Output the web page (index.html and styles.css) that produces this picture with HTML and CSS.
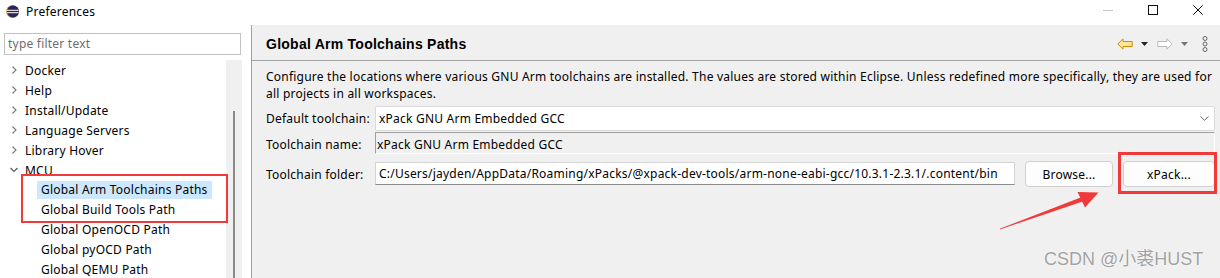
FILE: index.html
```html
<!DOCTYPE html>
<html>
<head>
<meta charset="utf-8">
<link rel="stylesheet" href="styles.css">
</head>
<body>
<div class="window">
  <div class="titlebar">
    <svg class="app-icon" width="13" height="13" viewBox="0 0 13 13">
      <circle cx="6.5" cy="6.5" r="6.5" fill="#e39a3b"/>
      <circle cx="7" cy="6.5" r="6" fill="#2c2457"/>
      <path d="M1 5.3h11.5M1 7.7h11.5" stroke="#fff" stroke-width="1"/>
    </svg>
    <span class="title">Preferences</span>
    <div class="win-controls">
      <div class="win-btn"><svg width="10" height="10" viewBox="0 0 10 10"><path d="M0 5.5h10" stroke="#c4c4c4" stroke-width="1"/></svg></div>
      <div class="win-btn"><svg width="10" height="10" viewBox="0 0 10 10"><rect x="0.5" y="0.5" width="9" height="9" fill="none" stroke="#111" stroke-width="1"/></svg></div>
      <div class="win-btn"><svg width="10" height="10" viewBox="0 0 10 10"><path d="M0.3 0.3L9.7 9.7M9.7 0.3L0.3 9.7" stroke="#111" stroke-width="1"/></svg></div>
    </div>
  </div>
  <div class="main">
    <aside class="left">
      <div class="filter">type filter text</div>
      <div class="tree-wrap">
        <div class="tree">
          <div class="row"><svg class="chev" width="8" height="8" viewBox="0 0 8 8"><path d="M2.5 0.5L6 4L2.5 7.5" fill="none" stroke="#777" stroke-width="1.1"/></svg><span>Docker</span></div>
          <div class="row"><svg class="chev" width="8" height="8" viewBox="0 0 8 8"><path d="M2.5 0.5L6 4L2.5 7.5" fill="none" stroke="#777" stroke-width="1.1"/></svg><span>Help</span></div>
          <div class="row"><svg class="chev" width="8" height="8" viewBox="0 0 8 8"><path d="M2.5 0.5L6 4L2.5 7.5" fill="none" stroke="#777" stroke-width="1.1"/></svg><span>Install/Update</span></div>
          <div class="row"><svg class="chev" width="8" height="8" viewBox="0 0 8 8"><path d="M2.5 0.5L6 4L2.5 7.5" fill="none" stroke="#777" stroke-width="1.1"/></svg><span>Language Servers</span></div>
          <div class="row"><svg class="chev" width="8" height="8" viewBox="0 0 8 8"><path d="M2.5 0.5L6 4L2.5 7.5" fill="none" stroke="#777" stroke-width="1.1"/></svg><span>Library Hover</span></div>
          <div class="row"><svg class="chev" width="8" height="8" viewBox="0 0 8 8"><path d="M0.5 2L4 5.5L7.5 2" fill="none" stroke="#555" stroke-width="1.1"/></svg><span>MCU</span></div>
          <div class="row child"><span class="label selected">Global Arm Toolchains Paths</span></div>
          <div class="row child"><span class="label">Global Build Tools Path</span></div>
          <div class="row child"><span class="label">Global OpenOCD Path</span></div>
          <div class="row child"><span class="label">Global pyOCD Path</span></div>
          <div class="row child"><span class="label">Global QEMU Path</span></div>
        </div>
        <div class="track"><div class="thumb"></div></div>
      </div>
    </aside>
    <main class="right">
      <div class="header">
        <span class="page-title">Global Arm Toolchains Paths</span>
        <div class="toolbar">
          <svg class="tb-back" width="16" height="12" viewBox="0 0 16 12"><path d="M0.8 6L6 0.8V3.5H15.2V8.5H6V11.2Z" fill="#fde7a0" stroke="#d38b00" stroke-width="1"/></svg>
          <svg class="tb-drop" width="7" height="4" viewBox="0 0 7 4"><path d="M0 0H7L3.5 4Z" fill="#222"/></svg>
          <svg class="tb-fwd" width="16" height="12" viewBox="0 0 16 12"><path d="M15.2 6L10 0.8V3.5H0.8V8.5H10V11.2Z" fill="#fff" stroke="#b9b9b9" stroke-width="1"/></svg>
          <svg class="tb-drop2" width="7" height="4" viewBox="0 0 7 4"><path d="M0 0H7L3.5 4Z" fill="#777"/></svg>
          <svg class="tb-menu" width="6" height="16" viewBox="0 0 6 16"><circle cx="3" cy="2.5" r="2" fill="none" stroke="#666" stroke-width="1"/><circle cx="3" cy="8" r="2" fill="none" stroke="#666" stroke-width="1"/><circle cx="3" cy="13.5" r="2" fill="none" stroke="#666" stroke-width="1"/></svg>
        </div>
      </div>
      <p class="desc">Configure the locations where various GNU Arm toolchains are installed. The values are stored within Eclipse. Unless redefined more specifically, they are used for all projects in all workspaces.</p>
      <div class="form">
        <div class="lbl r1">Default toolchain:</div>
        <div class="combo"><span>xPack GNU Arm Embedded GCC</span><svg width="9" height="5" viewBox="0 0 9 5"><path d="M0.5 0.5L4.5 4.3L8.5 0.5" fill="none" stroke="#666" stroke-width="1"/></svg></div>
        <div class="lbl r2">Toolchain name:</div>
        <div class="readonly">xPack GNU Arm Embedded GCC</div>
        <div class="lbl r3">Toolchain folder:</div>
        <div class="textfield">C:/Users/jayden/AppData/Roaming/xPacks/@xpack-dev-tools/arm-none-eabi-gcc/10.3.1-2.3.1/.content/bin</div>
        <div class="btn">Browse...</div>
        <div class="btn">xPack...</div>
      </div>
    </main>
  </div>
  <div class="mark mark-tree"></div>
  <div class="mark mark-btn"></div>
  <svg class="arrow" width="115" height="50" viewBox="0 0 115 50">
    <polygon points="9.8,44.5 10.2,43.5 90.6,12.6 92.6,16.4" fill="#f03a3a"/>
    <polygon points="87.5,7 108.5,7.6 95,22.5" fill="#f03a3a"/>
  </svg>
  <div class="watermark">CSDN @小裘HUST</div>
</div>
</body>
</html>
```
FILE: styles.css
```css
* { box-sizing: border-box; }
body {
  margin: 0;
  font-family: "Noto Sans", "Open Sans", sans-serif;
  font-size: 12px;
  letter-spacing: 0.22px;
  color: #000;
}
.window {
  position: relative;
  width: 1220px;
  height: 278px;
  overflow: hidden;
  background: #fff;
  display: flex;
  flex-direction: column;
}
.titlebar {
  height: 25px;
  flex-shrink: 0;
  display: flex;
  align-items: center;
  padding-left: 6px;
}
.app-icon { margin-right: 7px; margin-top: -3px; }
.title { font-size: 12px; margin-top: -3px; }
.win-controls { margin-left: auto; display: flex; }
.win-btn {
  width: 45px;
  height: 25px;
  display: flex;
  justify-content: center;
  align-items: flex-start;
  padding-top: 5px;
}
.main { flex: 1; display: flex; min-height: 0; }
.left {
  width: 251px;
  flex-shrink: 0;
  background: #fff;
  display: flex;
  flex-direction: column;
}
.filter {
  margin: 8px 10px 0 4px;
  height: 22px;
  border: 1px solid #c2c2c2;
  padding: 0 3px;
  line-height: 20px;
  color: #6e6e6e;
}
.tree-wrap { margin-top: 5px; display: flex; flex: 1; min-height: 0; }
.tree { width: 226px; }
.row {
  height: 20px;
  display: flex;
  align-items: center;
  white-space: nowrap;
}
.chev { margin-left: 10px; margin-right: 7px; }
.child { padding-left: 37px; }
.label { padding: 0 4px; line-height: 18px; }
.selected { background: #cce8ff; }
.track {
  width: 16px;
  background: #f0f0f0;
  padding: 51px 0 0 7px;
}
.thumb { width: 2px; height: 200px; background: #8a8a8a; }
.right {
  flex: 1;
  background: #f0f0f0;
  border-left: 1px solid #a0a0a0;
  display: flex;
  flex-direction: column;
}
.header {
  height: 36px;
  flex-shrink: 0;
  border-bottom: 1px solid #a0a0a0;
  display: flex;
  align-items: center;
  padding: 3px 12px 0 14px;
}
.page-title {
  font-family: "Liberation Sans", Arial, sans-serif;
  font-weight: bold;
  font-size: 14px;
  letter-spacing: 0.25px;
}
.toolbar { margin-left: auto; display: flex; align-items: center; }
.tb-drop { margin-left: 8px; }
.tb-fwd { margin-left: 9px; }
.tb-drop2 { margin-left: 8px; }
.tb-menu { margin-left: 14px; }
.desc {
  margin: 0;
  padding: 7px 2px 0 14px;
  line-height: 17px;
}
.form {
  display: grid;
  grid-template-columns: 99px 1fr 88px 92px;
  column-gap: 10px;
  padding: 0 5px 0 14px;
  margin-top: 4px;
}
.lbl { white-space: nowrap; display: flex; align-items: center; }
.lbl.r2 { padding-top: 4px; }
.combo {
  grid-column: 2 / 5;
  height: 25px;
  background: #fff;
  border: 1px solid #dadada;
  border-radius: 2px;
  display: flex;
  align-items: center;
  justify-content: space-between;
  padding: 0 5px 0 3px;
}
.readonly {
  grid-column: 2 / 5;
  height: 22px;
  margin-top: 1px;
  border-top: 1px solid #a0a0a0;
  border-left: 1px solid #a0a0a0;
  border-right: 1px solid #fff;
  border-bottom: 1px solid #fff;
  padding: 3px 0 0 1px;
  line-height: 18px;
}
.lbl.r3, .textfield, .btn { margin-top: 7px; }
.textfield {
  height: 23px;
  margin-top: 8px;
  background: #fff;
  border: 1px solid #d4d4d4;
  border-bottom-color: #8c8c8c;
  padding: 0 3px;
  line-height: 21px;
  white-space: nowrap;
  overflow: hidden;
}
.btn {
  height: 26px;
  background: #fdfdfd;
  border: 1px solid #d0d0d0;
  border-radius: 4px;
  display: flex;
  align-items: center;
  justify-content: center;
}
.mark { position: absolute; border: 2px solid #f03a3a; }
.mark-tree { left: 21px; top: 174px; width: 207px; height: 49px; }
.mark-btn { left: 1118px; top: 152px; width: 99px; height: 42px; border-width: 3px; }
.arrow { position: absolute; left: 990px; top: 185px; }
.watermark {
  position: absolute;
  left: 1044px;
  top: 249px;
  font-family: "Liberation Sans", "Noto Sans CJK SC", sans-serif;
  font-size: 18px;
  line-height: 20px;
  letter-spacing: 0;
  color: #a2a2a2;
  text-shadow: 0 0 1px #fff, 0 0 2px #fff;
}
```
